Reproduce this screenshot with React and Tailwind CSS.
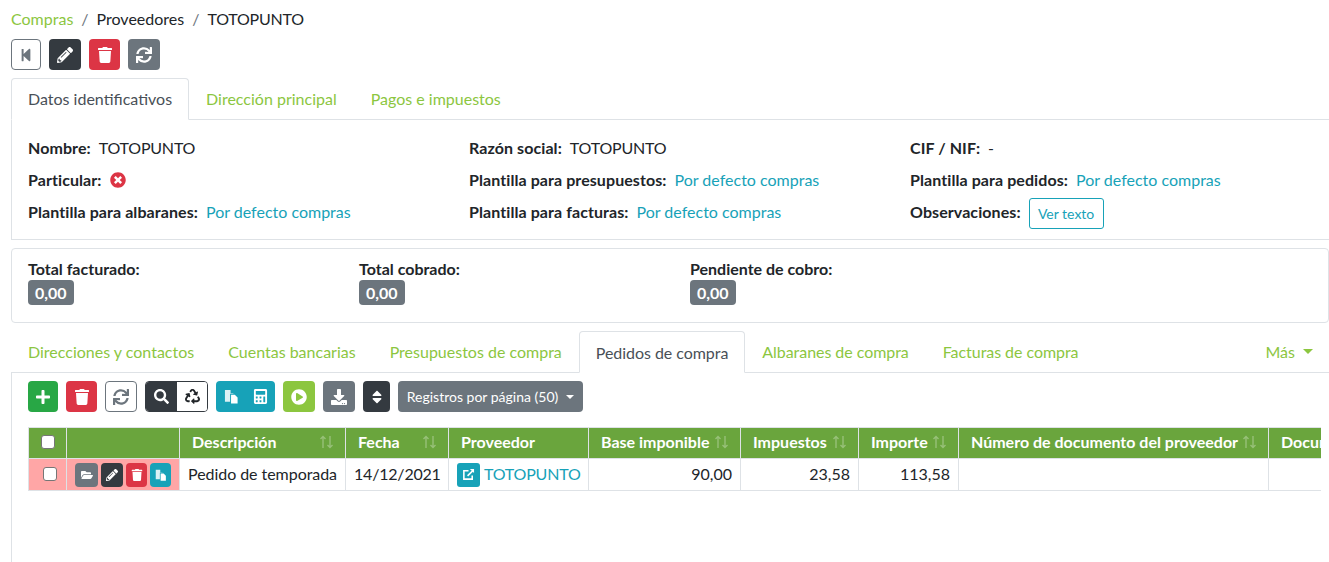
import React from "react";
import { FaStepBackward, FaPencilAlt, FaTrash, FaSync, FaPlus, FaSearch, FaRecycle, FaCalculator, FaPlayCircle, FaDownload, FaSort, FaFolderOpen, FaTimesCircle } from "react-icons/fa";

const Files = () => (
  <svg width="1em" height="1em" viewBox="0 0 16 16" fill="currentColor">
    <path d="M1 1h6v3.5h3V5H6.5v8.5H1z" opacity="0.85" />
    <path d="M7.5 6h4l3 3v6.5h-7z" />
  </svg>
);

const ExternalBox = () => (
  <svg width="1em" height="1em" viewBox="0 0 14 14" fill="none" stroke="currentColor" strokeWidth="1.7">
    <path d="M7 3H2v9h9V8" />
    <path d="M6 8.5 12 2.5" />
    <path d="M8.5 1h4.5v4.5z" fill="currentColor" stroke="none" />
  </svg>
);

const Btn = ({ cls, children }) => (
  <div className={"h-[31px] flex items-center justify-center rounded-[4px] text-[16px] shrink-0 " + cls}>{children}</div>
);

const Label = ({ children }) => <span className="font-bold text-[#212529] tracking-[0.08px]">{children}</span>;
const Link = ({ children }) => <span className="text-[#17a2b8]">{children}</span>;

const Info = ({ children, cls = "" }) => <div className={"flex items-center h-[32px] gap-[8px] " + cls}>{children}</div>;

const SortIcon = () => (
  <svg width="16" height="14" viewBox="0 0 16 14" className="shrink-0 text-white opacity-30" fill="none" stroke="currentColor" strokeWidth="1.4">
    <path d="M4 13V1.5M1.5 4 4 1.5 6.5 4M11 1v11.5M8.5 10l2.5 2.5 2.5-2.5" />
  </svg>
);

const Th = ({ w, children }) => (
  <th style={{ width: w }} className="h-[31px] border border-[#dee2e6] bg-[#6aa53d] text-white text-left font-bold pl-[12px] pr-[10px] pb-[3px]">
    <div className="flex items-center justify-between">
      <span className="whitespace-nowrap">{children}</span>
      <SortIcon />
    </div>
  </th>
);

const Check = ({ cls = "" }) => <div className={"w-[14px] h-[14px] bg-white border border-[#767676] rounded-[3px] " + cls} />;

const Mini = ({ cls, children }) => (
  <div className={"h-[24px] flex items-center justify-center rounded-[4px] text-[12px] text-white " + cls}>{children}</div>
);

const Tab = ({ active, children, cls = "" }) =>
  active ? (
    <div className={"h-[42px] px-[16px] flex items-center bg-white border border-[#dee2e6] border-b-white rounded-t-[4px] text-[#495057] -mb-px whitespace-nowrap " + cls}>{children}</div>
  ) : (
    <div className={"h-[42px] px-[17px] flex items-center text-[#8cc63f] whitespace-nowrap " + cls}>{children}</div>
  );

export default function App() {
  return (
    <div className="w-[1329px] h-[562px] overflow-hidden bg-white pl-[11px] text-[16px] text-[#212529]" style={{ fontFamily: "Lato, sans-serif" }}>
      <div className="h-[39px] flex items-center pb-[1px] gap-[8px]">
        <span className="text-[#8cc63f]">Compras</span>
        <span className="text-[#6c757d]">/</span>
        <span>Proveedores</span>
        <span className="text-[#6c757d]">/</span>
        <span className="tracking-[-0.2px]">TOTOPUNTO</span>
      </div>

      <div className="flex gap-[8px] h-[31px]">
        <Btn cls="w-[30px] border border-[#6c757d] text-[#6c757d] !text-[14px]"><FaStepBackward /></Btn>
        <Btn cls="w-[32px] bg-[#343a40] text-white"><FaPencilAlt /></Btn>
        <Btn cls="w-[31px] bg-[#dc3545] text-white"><FaTrash /></Btn>
        <Btn cls="w-[32px] bg-[#6c757d] text-white"><FaSync /></Btn>
      </div>

      <div className="flex mt-[8px] border-b border-[#dee2e6] h-[42px]">
        <Tab active>Datos identificativos</Tab>
        <Tab>Dirección principal</Tab>
        <Tab>Pagos e impuestos</Tab>
      </div>

      <div className="border-l border-b border-[#dee2e6] h-[120px] pt-[12px] pl-[16px] grid grid-cols-[441px_441px_1fr] content-start">
        <Info><Label>Nombre:</Label><span className="tracking-[-0.2px]">TOTOPUNTO</span></Info>
        <Info><Label>Razón social:</Label><span className="tracking-[-0.2px]">TOTOPUNTO</span></Info>
        <Info><Label>CIF / NIF:</Label><span>-</span></Info>
        <Info><Label>Particular:</Label><FaTimesCircle className="text-[#dc3545] text-[16px]" /></Info>
        <Info><Label>Plantilla para presupuestos:</Label><Link>Por defecto compras</Link></Info>
        <Info><Label>Plantilla para pedidos:</Label><Link>Por defecto compras</Link></Info>
        <Info><Label>Plantilla para albaranes:</Label><Link>Por defecto compras</Link></Info>
        <Info><Label>Plantilla para facturas:</Label><Link>Por defecto compras</Link></Info>
        <Info>
          <Label>Observaciones:</Label>
          <div className="h-[31px] w-[75px] mt-[3px] flex items-center justify-center border border-[#17a2b8] rounded-[3px] text-[#17a2b8] text-[14px]">Ver texto</div>
        </Info>
      </div>

      <div className="mt-[8px] h-[75px] border border-[#dee2e6] rounded-[4px] pt-[11px] pl-[16px] grid grid-cols-[331px_331px_1fr] content-start">
        {["Total facturado:", "Total cobrado:", "Pendiente de cobro:"].map((t) => (
          <div key={t}>
            <div className="font-bold leading-[18px]">{t}</div>
            <div className="mt-[2px] inline-flex h-[25px] items-center px-[7px] bg-[#6c757d] text-white font-bold text-[16px] rounded-[4px]">0,00</div>
          </div>
        ))}
      </div>

      <div className="flex mt-[8px] border-b border-[#dee2e6] h-[42px] items-end">
        <Tab cls="pt-[1px]">Direcciones y contactos</Tab>
        <Tab cls="pt-[1px]">Cuentas bancarias</Tab>
        <Tab cls="pt-[1px]">Presupuestos de compra</Tab>
        <Tab active cls="pt-[1px] tracking-[-0.05px]">Pedidos de compra</Tab>
        <Tab cls="pt-[1px] tracking-[-0.05px]">Albaranes de compra</Tab>
        <Tab cls="pt-[1px] tracking-[-0.05px]">Facturas de compra</Tab>
        <div className="ml-auto h-[42px] pt-[1px] pr-[16px] flex items-center gap-[8px] text-[#8cc63f]">
          Más
          <span className="w-0 h-0 border-x-[5px] border-x-transparent border-t-[5px] border-t-[#8cc63f]" />
        </div>
      </div>

      <div className="border-l border-[#dee2e6] h-[190px] pl-[16px] pt-[8px]">
        <div className="flex gap-[8px]">
          <Btn cls="w-[30px] bg-[#28a745] text-white"><FaPlus /></Btn>
          <Btn cls="w-[31px] bg-[#dc3545] text-white"><FaTrash /></Btn>
          <Btn cls="w-[32px] border border-[#6c757d] text-[#6c757d]"><FaSync /></Btn>
          <div className="flex h-[31px] w-[63px] rounded-[4px] border border-[#343a40] overflow-hidden text-[15px] shrink-0">
            <div className="w-[31px] bg-[#343a40] text-white flex items-center justify-center"><FaSearch /></div>
            <div className="flex-1 bg-white text-[#212529] flex items-center justify-center"><FaRecycle /></div>
          </div>
          <div className="flex h-[31px] w-[59px] rounded-[4px] bg-[#17a2b8] text-white text-[15px] shrink-0">
            <div className="w-[30px] flex items-center justify-center"><Files /></div>
            <div className="flex-1 flex items-center justify-center"><FaCalculator /></div>
          </div>
          <Btn cls="w-[32px] bg-[#8cc63f] text-white"><FaPlayCircle /></Btn>
          <Btn cls="w-[32px] bg-[#6c757d] text-white"><FaDownload /></Btn>
          <Btn cls="w-[27px] bg-[#343a40] text-white"><FaSort /></Btn>
          <Btn cls="w-[185px] bg-[#6c757d] text-white gap-[8px] !text-[14px]">
            Registros por página (50)
            <span className="w-0 h-0 border-x-[4px] border-x-transparent border-t-[4px] border-t-white" />
          </Btn>
        </div>

        <div className="mt-[15px] w-[1293px] overflow-hidden">
          <table className="border-collapse table-fixed w-[1400px] text-[#212529]">
            <thead>
              <tr>
                <th style={{ width: 38 }} className="h-[31px] border border-[#dee2e6] bg-[#6aa53d] pb-[2px]"><Check cls="mx-auto" /></th>
                <th style={{ width: 113 }} className="border border-[#dee2e6] bg-[#6aa53d]" />
                <Th w={166}>Descripción</Th>
                <Th w={103}>Fecha</Th>
                <th style={{ width: 140 }} className="border border-[#dee2e6] bg-[#6aa53d] text-white text-left font-bold px-[12px] pb-[3px]">Proveedor</th>
                <Th w={152}>Base imponible</Th>
                <Th w={118}>Impuestos</Th>
                <Th w={100}>Importe</Th>
                <Th w={310}>Número de documento del proveedor</Th>
                <Th w={160}>Documento</Th>
              </tr>
            </thead>
            <tbody>
              <tr className="h-[32px]">
                <td className="border border-[#dee2e6] bg-[#ffa6a6] pl-[14px] pb-[2px]"><Check /></td>
                <td className="border border-[#dee2e6] bg-[#ffa6a6] pl-[8px]">
                  <div className="flex gap-[3px]">
                    <Mini cls="w-[23px] bg-[#6c757d]"><FaFolderOpen /></Mini>
                    <Mini cls="w-[22px] bg-[#343a40]"><FaPencilAlt /></Mini>
                    <Mini cls="w-[21px] bg-[#dc3545]"><FaTrash /></Mini>
                    <Mini cls="w-[21px] bg-[#17a2b8]"><Files /></Mini>
                  </div>
                </td>
                <td className="border border-[#dee2e6] px-[8px] pb-[2px] whitespace-nowrap tracking-[-0.05px]">Pedido de temporada</td>
                <td className="border border-[#dee2e6] px-[8px] pb-[2px] whitespace-nowrap tracking-[-0.2px]">14/12/2021</td>
                <td className="border border-[#dee2e6] px-[8px]">
                  <div className="flex items-center gap-[4px] text-[#17a2b8] whitespace-nowrap">
                    <div className="w-[23px] h-[24px] shrink-0 flex items-center justify-center rounded-[3px] bg-[#17a2b8] text-white text-[13px]"><ExternalBox /></div>
                    <span className="tracking-[-0.2px] pb-[2px]">TOTOPUNTO</span>
                  </div>
                </td>
                <td className="border border-[#dee2e6] px-[8px] pb-[2px] text-right">90,00</td>
                <td className="border border-[#dee2e6] px-[8px] pb-[2px] text-right">23,58</td>
                <td className="border border-[#dee2e6] px-[8px] pb-[2px] text-right">113,58</td>
                <td className="border border-[#dee2e6]" />
                <td className="border border-[#dee2e6]" />
              </tr>
            </tbody>
          </table>
        </div>
      </div>
    </div>
  );
}
